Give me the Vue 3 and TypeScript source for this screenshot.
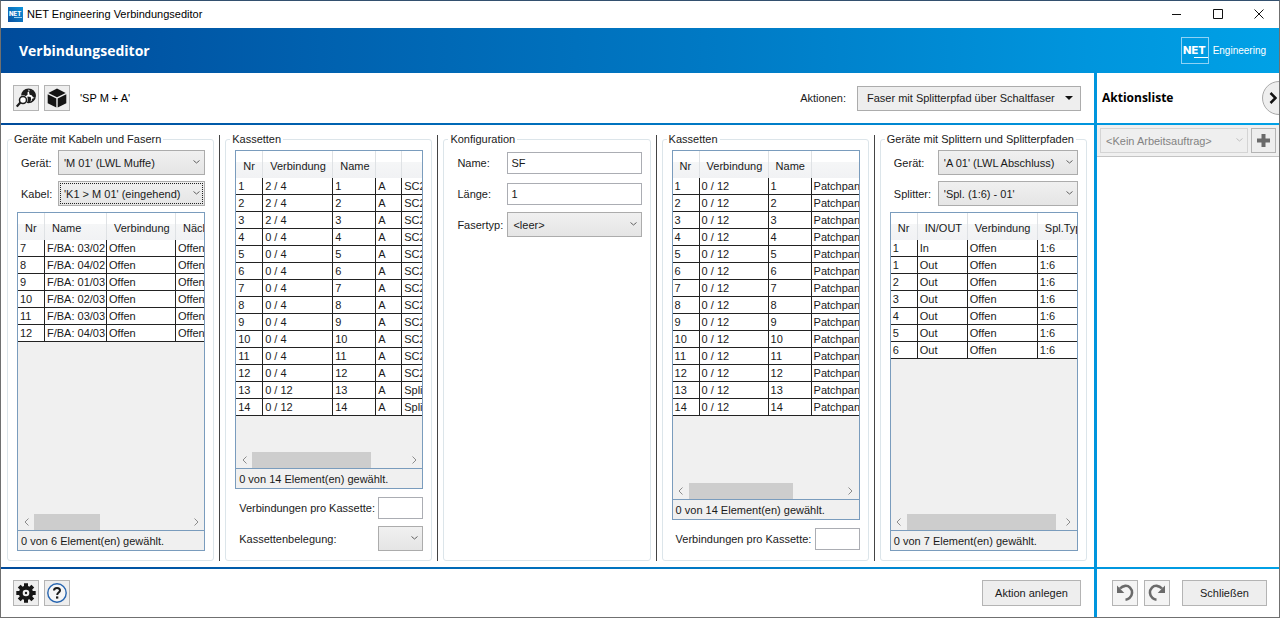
<script setup lang="ts">
import { ref } from 'vue'

interface Column {
  title: string
  width?: number
}
interface ComboField {
  id: string
  label: string
  value: string
  focused?: boolean
}
interface GridData {
  columns: Column[]
  rows: string[][]
  thumb: number
}
interface Panel {
  key: string
  title: string
  labels: string
  top: ComboField[]
  grid?: GridData
  perCassette?: boolean
  allocation?: boolean
}

const numbers = (from: number, to: number): number[] =>
  Array.from({ length: to - from + 1 }, (_, i) => from + i)

const fibres = ['03/02', '04/02', '01/03', '02/03', '03/03', '04/03']

const panels: Panel[] = [
  {
    key: 'cables',
    title: 'Geräte mit Kabeln und Fasern',
    labels: 'narrow',
    top: [
      { id: 'cable-device', label: 'Gerät:', value: "'M 01' (LWL Muffe)" },
      { id: 'cable', label: 'Kabel:', value: "'K1 > M 01' (eingehend)", focused: true },
    ],
    grid: {
      columns: [
        { title: 'Nr', width: 27 },
        { title: 'Name', width: 62 },
        { title: 'Verbindung', width: 69 },
        { title: 'Nächste' },
      ],
      rows: fibres.map((f, i) => [String(i + 7), `F/BA: ${f}`, 'Offen', 'Offen']),
      thumb: 43,
    },
  },
  {
    key: 'cassettes-left',
    title: 'Kassetten',
    labels: 'narrow',
    top: [],
    grid: {
      columns: [
        { title: 'Nr', width: 27 },
        { title: 'Verbindung', width: 70 },
        { title: 'Name', width: 43 },
        { title: '', width: 26 },
        { title: '' },
      ],
      rows: numbers(1, 14).map((n) => [
        String(n),
        n <= 3 ? '2 / 4' : n <= 12 ? '0 / 4' : '0 / 12',
        String(n),
        'A',
        n <= 12 ? 'SC2' : 'Splitter',
      ]),
      thumb: 77,
    },
    perCassette: true,
    allocation: true,
  },
  { key: 'config', title: 'Konfiguration', labels: 'wide', top: [] },
  {
    key: 'cassettes-right',
    title: 'Kassetten',
    labels: 'narrow',
    top: [],
    grid: {
      columns: [
        { title: 'Nr', width: 27 },
        { title: 'Verbindung', width: 69 },
        { title: 'Name', width: 43 },
        { title: '' },
      ],
      rows: numbers(1, 14).map((n) => [String(n), '0 / 12', String(n), 'Patchpanel']),
      thumb: 68,
    },
    perCassette: true,
  },
  {
    key: 'splitters',
    title: 'Geräte mit Splittern und Splitterpfaden',
    labels: 'medium',
    top: [
      { id: 'splitter-device', label: 'Gerät:', value: "'A 01' (LWL Abschluss)" },
      { id: 'splitter', label: 'Splitter:', value: "'Spl. (1:6) - 01'" },
    ],
    grid: {
      columns: [
        { title: 'Nr', width: 27 },
        { title: 'IN/OUT', width: 50 },
        { title: 'Verbindung', width: 70 },
        { title: 'Spl.Typ' },
      ],
      rows: [['1', 'In', 'Offen', '1:6'], ...numbers(1, 6).map((n) => [String(n), 'Out', 'Offen', '1:6'])],
      thumb: 97,
    },
  },
]

const name = ref('SF')
const length = ref('1')
</script>

<template>
  <div class="window">
    <header class="titlebar">
      <svg class="app-icon" viewBox="0 0 15 15" aria-hidden="true">
        <defs>
          <linearGradient id="appIcon" x1="0" y1="1" x2="1" y2="0">
            <stop offset="0" stop-color="#0a4f9f" />
            <stop offset="1" stop-color="#0d95dc" />
          </linearGradient>
        </defs>
        <rect width="15" height="15" fill="url(#appIcon)" />
        <text x="1" y="9" font-family="Inter, sans-serif" font-size="6" font-weight="800" fill="#fff">NET</text>
        <path d="M6 10.500h8" stroke="#9fd0ee" stroke-width="1" />
      </svg>
      <span class="caption">NET Engineering Verbindungseditor</span>
      <div class="window-buttons">
        <button type="button" aria-label="Minimieren">
          <svg viewBox="0 0 10 10"><path d="M0 5.500h9" /></svg>
        </button>
        <button type="button" aria-label="Maximieren">
          <svg viewBox="0 0 10 10"><path d="M.5 .5h9v9h-9z" /></svg>
        </button>
        <button type="button" aria-label="Fenster schließen">
          <svg viewBox="0 0 10 10"><path d="M.5 .5l9 9M9.500 .5l-9 9" /></svg>
        </button>
      </div>
    </header>

    <div class="frame">
      <div class="banner">
        <h1>Verbindungseditor</h1>
        <div class="brand">
          <svg class="brand-box" viewBox="0 0 28 27" aria-hidden="true">
            <rect x=".5" y=".5" width="27" height="26" fill="none" stroke="#8fd2f5" />
            <text x="2" y="17" font-family="Inter, sans-serif" font-size="11" font-weight="800" fill="#fff">NET</text>
            <path d="M13 20.500h14" stroke="#fff" />
          </svg>
          <span class="brand-name">Engineering</span>
        </div>
      </div>

      <div class="workspace">
        <div class="toolbar">
          <button type="button" class="icon-button" aria-label="In Karte suchen">
            <svg viewBox="0 0 20 20">
              <circle cx="12.500" cy="7.800" r="6.700" fill="#fff" stroke="#1c1c1c" stroke-width="1.400" />
              <path d="M6 6C7 3 9 1.400 11.500 1.200L13 3.200 11.300 4.700 11.800 6.200 9.500 8.500 6 8z" fill="#1c1c1c" />
              <path d="M13.800 1.400l3.200 1.300 2.300 3.200.2 2.800-2.200.7-1.700-2.100-2-.6-.6-2.600z" fill="#1c1c1c" />
              <path d="M11.500 8.500l3.200.5.5 2.700-1.500 2.700-2.500 0z" fill="#1c1c1c" />
              <path d="M16.200 10.800l2.600-.8-1.600 2.800-1.500.7z" fill="#1c1c1c" />
              <circle cx="7" cy="12" r="4.700" fill="#eee" />
              <circle cx="7" cy="12" r="3.500" fill="#fff" stroke="#1c1c1c" stroke-width="1.500" />
              <path d="M4.400 14.600L.8 18.600" stroke="#1c1c1c" stroke-width="2.200" />
            </svg>
          </button>
          <button type="button" class="icon-button" aria-label="3D-Objekt">
            <svg viewBox="0 0 20 20" fill="#141414">
              <path d="M10 .4l8.700 4.500L10 9.200 1.300 4.900z" />
              <path d="M.7 6.200l8.600 4.200v9.200L.7 15.200z" />
              <path d="M19.300 6.200l-8.600 4.200v9.200l8.600-4.400z" />
            </svg>
          </button>
          <span class="object-name">'SP M + A'</span>
          <label class="action-label" for="action">Aktionen:</label>
          <span class="combo action-combo">
            <select id="action">
              <option>Faser mit Splitterpfad über Schaltfaser</option>
            </select>
            <svg class="solid" viewBox="0 0 8 4"><path d="M0 0h8L4 4z" /></svg>
          </span>
        </div>

        <div class="side-head">
          <h2>Aktionsliste</h2>
          <button type="button" class="collapse" aria-label="Aktionsliste einklappen">
            <svg viewBox="0 0 8 12"><path d="M1.500 1l5 5-5 5" /></svg>
          </button>
        </div>

        <main class="panels">
          <template v-for="(panel, index) in panels" :key="panel.key">
            <div v-if="index > 0" class="divider"></div>
            <fieldset class="group">
              <legend>{{ panel.title }}</legend>
              <div class="group-body">
                <div v-for="field in panel.top" :key="field.id" class="field" :class="panel.labels">
                  <label :for="field.id">{{ field.label }}</label>
                  <span class="combo" :class="{ focused: field.focused }">
                    <select :id="field.id">
                      <option>{{ field.value }}</option>
                    </select>
                    <svg viewBox="0 0 7 4"><path d="M.5 .5l3 2.500 3-2.500" /></svg>
                  </span>
                </div>

                <template v-if="panel.key === 'config'">
                  <div class="field wide">
                    <label for="config-name">Name:</label>
                    <input id="config-name" v-model="name" type="text" />
                  </div>
                  <div class="field wide">
                    <label for="config-length">Länge:</label>
                    <input id="config-length" v-model="length" type="text" />
                  </div>
                  <div class="field wide">
                    <label for="fibre-type">Fasertyp:</label>
                    <span class="combo">
                      <select id="fibre-type">
                        <option>&lt;leer&gt;</option>
                      </select>
                      <svg viewBox="0 0 7 4"><path d="M.5 .5l3 2.500 3-2.500" /></svg>
                    </span>
                  </div>
                </template>

                <div v-if="panel.grid" class="grid">
                  <div class="grid-view">
                    <table>
                      <colgroup>
                        <col
                          v-for="(column, c) in panel.grid.columns"
                          :key="c"
                          :style="{ width: column.width ? column.width + 'px' : 'auto' }"
                        />
                      </colgroup>
                      <thead>
                        <tr>
                          <th v-for="(column, c) in panel.grid.columns" :key="c" scope="col">{{ column.title }}</th>
                        </tr>
                      </thead>
                      <tbody>
                        <tr v-for="(row, r) in panel.grid.rows" :key="r">
                          <td v-for="(cell, c) in row" :key="c">{{ cell }}</td>
                        </tr>
                      </tbody>
                    </table>
                  </div>
                  <div class="scrollbar">
                    <button type="button" aria-label="Nach links">
                      <svg viewBox="0 0 5 8"><path d="M4.500 .5L1 4l3.500 3.500" /></svg>
                    </button>
                    <div class="track"><div class="thumb" :style="{ width: panel.grid.thumb + '%' }"></div></div>
                    <button type="button" aria-label="Nach rechts">
                      <svg viewBox="0 0 5 8"><path d="M.5 .5L4 4 .5 7.500" /></svg>
                    </button>
                  </div>
                  <div class="status">0 von {{ panel.grid.rows.length }} Element(en) gewählt.</div>
                </div>

                <div v-if="panel.perCassette" class="field trailing">
                  <label :for="panel.key + '-count'">Verbindungen pro Kassette:</label>
                  <input :id="panel.key + '-count'" type="text" />
                </div>
                <div v-if="panel.allocation" class="field trailing">
                  <label :for="panel.key + '-allocation'">Kassettenbelegung:</label>
                  <span class="combo">
                    <select :id="panel.key + '-allocation'">
                      <option></option>
                    </select>
                    <svg viewBox="0 0 7 4"><path d="M.5 .5l3 2.500 3-2.500" /></svg>
                  </span>
                </div>
              </div>
            </fieldset>
          </template>
        </main>

        <aside class="side">
          <div class="side-bar">
            <span class="combo disabled">
              <select aria-label="Arbeitsauftrag" disabled>
                <option>&lt;Kein Arbeitsauftrag&gt;</option>
              </select>
              <svg viewBox="0 0 7 4"><path d="M.5 .5l3 2.500 3-2.500" /></svg>
            </span>
            <button type="button" class="add" aria-label="Arbeitsauftrag hinzufügen">
              <svg viewBox="0 0 13 13"><path d="M6.500 0v13M0 6.500h13" stroke="#6a6a6a" stroke-width="4" /></svg>
            </button>
          </div>
        </aside>

        <footer class="footer">
          <button type="button" class="icon-button" aria-label="Einstellungen">
            <svg viewBox="0 0 20 20">
              <g stroke="#161616" stroke-width="4">
                <path d="M10 .3v19.400M.3 10h19.400M3.200 3.200l13.600 13.600M16.800 3.200L3.200 16.800" />
              </g>
              <circle cx="10" cy="10" r="7.200" fill="#161616" />
              <circle cx="10" cy="10" r="3.300" fill="#eee" />
              <circle cx="10" cy="10" r="1.200" fill="#161616" />
            </svg>
          </button>
          <button type="button" class="icon-button" aria-label="Hilfe">
            <svg viewBox="0 0 20 20" fill="none">
              <circle cx="10" cy="10" r="9.200" fill="#f6f6f6" stroke="#2765b0" stroke-width="1.400" />
              <path d="M7 7.600C7 5.800 8.200 4.900 10 4.900s3 .9 3 2.500c0 2.100-2.800 2.200-2.800 4.500" stroke="#1c1c1c" stroke-width="2" />
              <path d="M9 13.400h2.300v2.200H9z" fill="#1c1c1c" />
            </svg>
          </button>
          <button type="button" class="text-button create">Aktion anlegen</button>
        </footer>

        <footer class="side-footer">
          <button type="button" class="icon-button" aria-label="Rückgängig">
            <svg viewBox="0 0 20 20" fill="none">
              <path d="M5 5.500C8 2.200 12.500 2 15 4.600c3 3 2.600 8-.5 10.400-1.200 1-2.300 1.500-4 1.700" stroke="#6a6a6a" stroke-width="2.600" />
              <path d="M2 2.500v7.500h7.300z" fill="#6a6a6a" />
            </svg>
          </button>
          <button type="button" class="icon-button" aria-label="Wiederholen">
            <svg viewBox="0 0 20 20" fill="none">
              <path d="M15 5.500C12 2.200 7.500 2 5 4.600c-3 3-2.600 8 .5 10.400 1.200 1 2.300 1.500 4 1.700" stroke="#6a6a6a" stroke-width="2.600" />
              <path d="M18 2.500v7.500h-7.300z" fill="#6a6a6a" />
            </svg>
          </button>
          <button type="button" class="text-button close">Schließen</button>
        </footer>
      </div>
    </div>
  </div>
</template>

<style>
body {
  margin: 0;
}
</style>

<style scoped>
* {
  box-sizing: border-box;
}
.window {
  display: flex;
  flex-direction: column;
  min-height: 100vh;
  border: 1px solid #707070;
  border-top-color: #33506f;
  background: #fff;
  color: #1a1a1a;
  font-family: "Liberation Sans", Arial, sans-serif;
  font-size: 11px;
  line-height: 16px;
  overflow: hidden;
}
button,
input,
select {
  margin: 0;
  font: inherit;
  color: inherit;
}
svg {
  display: block;
}

/* Title bar */
.titlebar {
  display: flex;
  align-items: center;
  height: 27px;
  padding: 0 0 1px 7px;
  color: #000;
}
.app-icon {
  width: 15px;
  height: 15px;
  margin-right: 4px;
}
.window-buttons {
  display: flex;
  margin-left: auto;
}
.window-buttons button {
  display: grid;
  place-items: center;
  width: 41px;
  height: 26px;
  padding: 0;
  border: 0;
  background: none;
}
.window-buttons svg {
  width: 10px;
  height: 10px;
  fill: none;
  stroke: #111;
}

/* Blue frame: banner plus the rules that show between the panes */
.frame {
  flex: 1;
  display: flex;
  flex-direction: column;
  background: linear-gradient(90deg, #004b9b, #0061af 25%, #0079c4 55%, #0095dd 85%, #00a1e6);
}
.banner {
  display: flex;
  align-items: center;
  justify-content: space-between;
  height: 45px;
  padding: 0 13px 0 18px;
  color: #fff;
}
h1,
h2 {
  margin: 0;
  font-family: "Open Sans", "Noto Sans", sans-serif;
  font-size: 14px;
  font-weight: 700;
  line-height: 18px;
}
h2 {
  font-size: 12px;
}
.brand {
  display: flex;
  align-items: center;
  gap: 4px;
}
.brand-box {
  width: 28px;
  height: 27px;
}
.brand-name {
  font-size: 10px;
}
.workspace {
  flex: 1;
  display: grid;
  grid-template-columns: minmax(0, 1fr) 182px;
  grid-template-rows: 50px 1fr 48px;
  gap: 2px 3px;
}
.workspace > * {
  background: #fff;
}

/* Toolbars */
.toolbar,
.footer {
  display: flex;
  align-items: center;
  gap: 5px;
  padding: 0 13px 0 12px;
}
.icon-button {
  display: grid;
  place-items: center;
  width: 26px;
  height: 26px;
  padding: 0;
  border: 1px solid #b4b4b4;
  background: #eee;
}
.icon-button svg {
  width: 20px;
  height: 20px;
}
.object-name {
  margin-left: 5px;
  color: #000;
}
.action-label {
  margin-left: auto;
}
.action-combo {
  width: 224px;
  margin-left: 6px;
}
.combo.action-combo select {
  padding-left: 9px;
  background: #eee;
}
.text-button {
  height: 26px;
  padding: 0;
  border: 1px solid #b4b4b4;
  background: #eee;
  text-align: center;
}
.create {
  width: 99px;
  margin-left: auto;
}

/* Combo boxes and inputs */
.combo {
  position: relative;
  display: block;
  height: 25px;
}
.combo select {
  display: block;
  width: 100%;
  height: 100%;
  padding: 0 16px 0 5px;
  border: 1px solid #acacac;
  border-radius: 0;
  background: linear-gradient(#f0f0f0, #e5e5e5);
  appearance: none;
  outline: none;
}
.combo svg {
  position: absolute;
  top: 10px;
  right: 5px;
  width: 7px;
  height: 4px;
  fill: none;
  stroke: #606060;
  pointer-events: none;
}
.combo svg.solid {
  right: 8px;
  width: 8px;
  fill: #111;
  stroke: none;
}
.combo.focused select {
  outline: 1px dotted #222;
  outline-offset: -3px;
}
.combo.disabled select {
  border-color: #d4d4d4;
  background: #efefef;
  color: #838383;
  opacity: 1;
}
.combo.disabled svg {
  stroke: #bfbfbf;
}
input {
  width: 100%;
  height: 22px;
  padding: 0 3px;
  border: 1px solid #abadb3;
  background: #fff;
}

/* Panels */
.panels {
  display: grid;
  grid-template-columns: minmax(0, 1fr) repeat(4, 1px minmax(0, 1fr));
  column-gap: 5px;
  padding: 6px 7px 6px 6px;
}
.divider {
  margin-top: 4px;
  background: #444;
}
.group {
  display: flex;
  flex-direction: column;
  min-width: 0;
  margin: 0;
  padding: 0;
  border: 1px solid #dce5ea;
  border-radius: 3px;
}
.group legend {
  height: 16px;
  margin-left: 4px;
  padding: 0 2px;
  line-height: 16px;
  white-space: nowrap;
}
.group-body {
  flex: 1;
  display: flex;
  flex-direction: column;
  gap: 6px;
  min-height: 0;
  padding: 3px 8px 9px 9px;
}
.field {
  display: grid;
  align-items: center;
  height: 25px;
  padding-left: 4px;
  white-space: nowrap;
}
.field.narrow {
  grid-template-columns: 37px minmax(0, 1fr);
}
.field.medium {
  grid-template-columns: 44px minmax(0, 1fr);
}
.field.wide {
  grid-template-columns: 50px minmax(0, 1fr);
}
.field.trailing {
  grid-template-columns: minmax(0, 1fr) 45px;
}

/* Data grids */
.grid {
  flex: 1;
  display: flex;
  flex-direction: column;
  min-height: 0;
  border: 1px solid #7a9cbd;
  background: #f0f0f0;
  overflow: hidden;
}
.grid-view {
  flex: 1;
  overflow: hidden;
}
table {
  width: 100%;
  table-layout: fixed;
  border-collapse: separate;
  border-spacing: 0;
  background: #fff;
}
th {
  height: 27px;
  padding: 2px 0 0 7px;
  border-right: 1px solid #dfe2e5;
  background: linear-gradient(#fff 40%, #f5f6f7 42%, #f1f2f4);
  font-weight: 400;
  line-height: 16px;
  text-align: left;
  white-space: nowrap;
  overflow: hidden;
}
td {
  height: 17px;
  padding: 0 0 0 2px;
  border-right: 1px solid #222;
  border-bottom: 1px solid #222;
  line-height: 16px;
  white-space: nowrap;
  overflow: hidden;
}
th:last-child,
td:last-child {
  border-right: 0;
}
.scrollbar {
  display: flex;
  height: 16px;
}
.scrollbar button {
  display: grid;
  place-items: center;
  width: 16px;
  padding: 0;
  border: 0;
  background: none;
}
.scrollbar svg {
  width: 5px;
  height: 8px;
  fill: none;
  stroke: #8c8c8c;
}
.track {
  flex: 1;
}
.thumb {
  height: 100%;
  background: #cdcdcd;
}
.status {
  height: 20px;
  padding: 2px 3px 0;
  border-top: 1px solid #7a9cbd;
  white-space: nowrap;
}

/* Action list */
.side-head {
  display: flex;
  align-items: center;
  justify-content: space-between;
  padding-left: 5px;
  color: #000;
  overflow: hidden;
}
.collapse {
  flex: none;
  width: 34px;
  height: 34px;
  margin-right: -17px;
  padding: 0 0 0 6px;
  border: 1px solid #a9a9a9;
  border-radius: 50%;
  background: #eee;
}
.collapse svg {
  width: 8px;
  height: 12px;
  fill: none;
  stroke: #111;
  stroke-width: 2.500;
}
.side-bar {
  display: flex;
  gap: 3px;
  padding: 3px;
  border-bottom: 1px solid #c4c4c4;
  background: #f0f0f0;
}
.side-bar .combo {
  flex: 1;
}
.add {
  display: grid;
  place-items: center;
  width: 25px;
  height: 25px;
  padding: 0;
  border: 1px solid #b4b4b4;
  background: #eee;
}
.add svg {
  width: 13px;
  height: 13px;
}
.side-footer {
  display: flex;
  align-items: center;
  gap: 6px;
  padding: 0 12px 0 15px;
}
.side-footer .icon-button {
  background: #f4f4f4;
}
.close {
  flex: 1;
  margin-left: 6px;
}
</style>
